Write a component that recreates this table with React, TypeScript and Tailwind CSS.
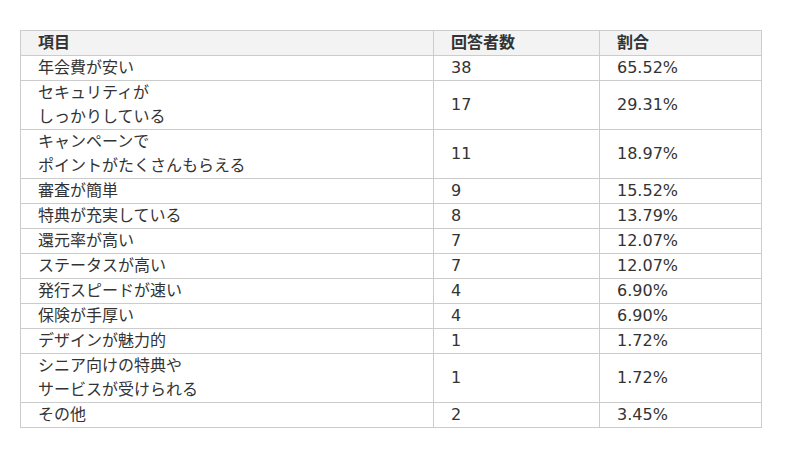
import React from "react";

const rows: [string[], string, string][] = [
  [["年会費が安い"], "38", "65.52%"],
  [["セキュリティが", "しっかりしている"], "17", "29.31%"],
  [["キャンペーンで", "ポイントがたくさんもらえる"], "11", "18.97%"],
  [["審査が簡単"], "9", "15.52%"],
  [["特典が充実している"], "8", "13.79%"],
  [["還元率が高い"], "7", "12.07%"],
  [["ステータスが高い"], "7", "12.07%"],
  [["発行スピードが速い"], "4", "6.90%"],
  [["保険が手厚い"], "4", "6.90%"],
  [["デザインが魅力的"], "1", "1.72%"],
  [["シニア向けの特典や", "サービスが受けられる"], "1", "1.72%"],
  [["その他"], "2", "3.45%"],
];

export default function App() {
  return (
    <div
      className="w-[800px] h-[458px] bg-white pt-[30px] pl-[20px]"
      style={{ fontFamily: '"DejaVu Sans", "Noto Sans CJK JP", sans-serif' }}
    >
      <table className="border-collapse text-[16px] leading-[24px] text-[#333333]">
        <thead>
          <tr className="bg-[#f3f3f3]">
            <th className="w-[413px] border border-[#cccccc] pl-[17px] text-left font-bold">項目</th>
            <th className="w-[166px] border border-[#cccccc] pl-[17px] text-left font-bold">回答者数</th>
            <th className="w-[162px] border border-[#cccccc] pl-[17px] text-left font-bold">割合</th>
          </tr>
        </thead>
        <tbody>
          {rows.map(([label, n, p], i) => (
            <tr key={i}>
              <td className="border border-[#cccccc] pl-[17px] align-middle">
                {label.map((l, j) => (
                  <div key={j}>{l}</div>
                ))}
              </td>
              <td className="border border-[#cccccc] pl-[17px] align-middle">{n}</td>
              <td className="border border-[#cccccc] pl-[17px] align-middle">{p}</td>
            </tr>
          ))}
        </tbody>
      </table>
    </div>
  );
}
